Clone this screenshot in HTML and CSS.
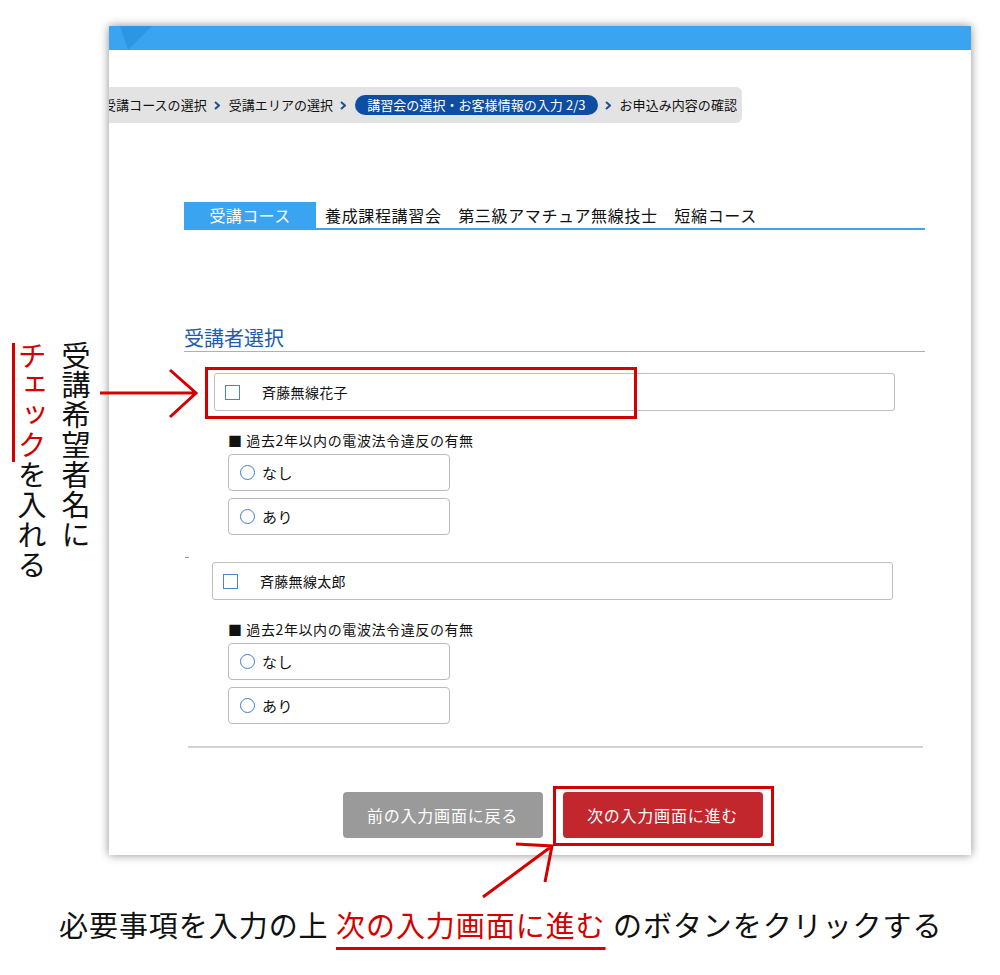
FILE: index.html
```html
<!DOCTYPE html>
<html lang="ja">
<head>
<meta charset="utf-8">
<title>受講者選択</title>
<link rel="stylesheet" href="styles.css">
</head>
<body>
<div class="canvas">
  <div class="window">
    <div class="topbar"></div>
    <nav class="crumbs">
      <span class="crumb">受講コースの選択</span>
      <svg class="chev" viewBox="0 0 6 9"><polyline points="1,1 5,4.5 1,8" fill="none" stroke="#1d4f94" stroke-width="2"/></svg>
      <span class="crumb">受講エリアの選択</span>
      <svg class="chev" viewBox="0 0 6 9"><polyline points="1,1 5,4.5 1,8" fill="none" stroke="#1d4f94" stroke-width="2"/></svg>
      <span class="crumb current">講習会の選択・お客様情報の入力 2/3</span>
      <svg class="chev" viewBox="0 0 6 9"><polyline points="1,1 5,4.5 1,8" fill="none" stroke="#1d4f94" stroke-width="2"/></svg>
      <span class="crumb">お申込み内容の確認</span>
    </nav>
    <main class="content">
      <div class="course">
        <span class="course-label">受講コース</span>
        <span class="course-name">養成課程講習会　第三級アマチュア無線技士　短縮コース</span>
      </div>
      <h2 class="section-title">受講者選択</h2>
      <div class="person">
        <div class="person-row"><span class="checkbox"></span><span class="person-name">斉藤無線花子</span></div>
        <p class="question">■ 過去2年以内の電波法令違反の有無</p>
        <div class="option"><span class="radio"></span>なし</div>
        <div class="option"><span class="radio"></span>あり</div>
      </div>
      <div class="dash"></div>
      <div class="person second">
        <div class="person-row"><span class="checkbox"></span><span class="person-name">斉藤無線太郎</span></div>
        <p class="question">■ 過去2年以内の電波法令違反の有無</p>
        <div class="option"><span class="radio"></span>なし</div>
        <div class="option"><span class="radio"></span>あり</div>
      </div>
      <hr class="divider">
      <div class="buttons">
        <button class="btn btn-back">前の入力画面に戻る</button>
        <button class="btn btn-next">次の入力画面に進む</button>
      </div>
    </main>
  </div>
  <p class="caption">必要事項を入力の上 <span class="hl">次の入力画面に進む</span> のボタンをクリックする</p>

  <p class="note-v">受講希望者名に<br><span class="red">チェック</span>を入れる</p>
  <div class="vbar"></div>
  <svg class="arrow1" viewBox="0 0 110 60"><path d="M5 28 H101 M75 5 L101 28 L75 52" fill="none" stroke="#d40000" stroke-width="3"/></svg>
  <div class="mark mark1"></div>
  <div class="mark mark2"></div>
  <svg class="arrow2" viewBox="0 0 90 70"><path d="M8 62 L77 11 M41 9 L77 11 L70 47" fill="none" stroke="#d40000" stroke-width="3"/></svg>
</div>
</body>
</html>
```
FILE: styles.css
```css
* { box-sizing: border-box; }
html, body { margin: 0; background: #fff; }
body { font-family: "Noto Sans CJK JP", "Noto Sans", sans-serif; color: #111; }

.canvas { position: relative; width: 1000px; height: 975px; padding-top: 26px; overflow: hidden; }

.window {
  margin-left: 109px; width: 862px; height: 829px; background: #fff;
  box-shadow: 0 0 9px rgba(0,0,0,.45); overflow: hidden;
}
.topbar { position: relative; height: 24px; background: #3ba4f0; }
.topbar::before {
  content: ""; position: absolute; left: 11px; top: 0; width: 32px; height: 24px;
  background: #2e95e2; clip-path: polygon(0 0, 100% 0, 8px 100%);
}

.crumbs {
  display: flex; align-items: center; margin: 37px 0 0 -6px; width: 639px; height: 36px;
  background: #e3e3e3; border-radius: 0 6px 6px 0; font-size: 13px; white-space: nowrap; color: #111;
}
.crumb { line-height: 20px; letter-spacing: 0.05px; }
.crumb.current { background: #0d4ea3; color: #fff; border-radius: 10px; padding: 0 12px; height: 20px; }
.chev { width: 6px; height: 9px; margin: 0 9px 0 7px; flex: none; }

.content { margin-left: 75px; width: 741px; }
.course { display: flex; margin-top: 79px; border-bottom: 2px solid #3ba4f0; }
.course-label { width: 132px; background: #3ba4f0; color: #fff; font-size: 16px; line-height: 26px; text-align: center; letter-spacing: 0.4px; }
.course-name { margin-left: 9px; font-size: 16px; line-height: 26px; letter-spacing: 0.65px; }

.section-title {
  margin: 96px 0 0; font-size: 20px; font-weight: normal; line-height: 24px;
  padding-bottom: 1px; border-bottom: 1px solid #b0b0b0; color: #1a5cae;
}

.person-row {
  display: flex; align-items: center; margin: 21px 0 0 30px; width: 681px; height: 38px;
  padding-left: 10px; border: 1px solid #bdbdbd; border-radius: 3px;
}
.person.second .person-row { margin: 4px 0 0 28px; }
.checkbox { width: 15px; height: 15px; border: 1.5px solid #4f82c4; flex: none; }
.person-name { margin-left: 22px; font-size: 14px; letter-spacing: 0.3px; }

.question { margin: 19px 0 0 44px; font-size: 14px; line-height: 20px; letter-spacing: 0.6px; }
.option {
  display: flex; align-items: center; margin: 4px 0 0 44px; width: 222px; height: 37px;
  padding-left: 11px; border: 1px solid #bbb; border-radius: 4px; font-size: 15px; letter-spacing: 0.5px;
}
.option + .option { margin-top: 7px; }
.radio { width: 15px; height: 15px; border: 1.5px solid #3d7bd0; border-radius: 50%; margin-right: 7px; flex: none; }

.dash { margin: 22px 0 0 1px; width: 4px; height: 1px; background: #999; }
.divider { margin: 22px 0 0 4px; width: 735px; height: 0; border: 0; border-top: 2px solid #d3d3d3; }

.buttons { display: flex; justify-content: center; gap: 20px; margin-top: 44px; padding-right: 4px; }
.btn {
  width: 200px; height: 46px; border: 0; border-radius: 4px; color: #fff;
  font-family: inherit; font-size: 16px; letter-spacing: 0.8px; padding: 0;
}
.btn-back { background: #9a9a9a; }
.btn-next { background: #c1272d; }

.caption {
  margin: 49px 0 0; padding-left: 59px; font-size: 29px; line-height: 40px;
  letter-spacing: 0.95px; white-space: nowrap; color: #111;
}
.hl { color: #d40000; text-decoration: underline 3px #d40000; text-underline-offset: 10px; }

.note-v {
  position: absolute; left: 10px; top: 341px; margin: 0; writing-mode: vertical-rl;
  font-size: 29px; line-height: 44px; letter-spacing: 0.9px; color: #111;
}
.note-v .red { color: #d40000; }
.vbar { position: absolute; left: 12px; top: 343px; width: 3px; height: 119px; background: #d40000; }
.arrow1 { position: absolute; left: 95px; top: 365px; width: 110px; height: 60px; }
.arrow2 { position: absolute; left: 475px; top: 835px; width: 90px; height: 70px; }
.mark { position: absolute; border: 3px solid #d40000; }
.mark1 { left: 205px; top: 367px; width: 432px; height: 52px; }
.mark2 { left: 553px; top: 786px; width: 221px; height: 60px; }
```
